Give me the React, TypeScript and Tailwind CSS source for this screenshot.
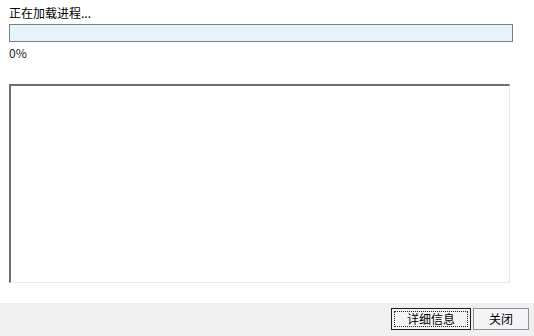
export default function App() {
  const font = { fontFamily: '"Noto Sans CJK SC", "Liberation Sans", sans-serif' };
  return (
    <div className="w-[534px] h-[336px] flex flex-col bg-white text-[12px] text-black" style={font}>
      <div className="flex-1 flex flex-col pl-[9px]">
        <div className="h-[24px] pt-[6px] leading-[14px]">正在加载进程...</div>
        <div className="w-[504px] h-[18px] border border-[#7f7f7f] bg-[#e6f3fb]" />
        <div className="mt-[4px] leading-[14px] text-[#222]">0%</div>
        <div className="mt-[24px] w-[501px] h-[199px] border-t-2 border-l-2 border-r border-b border-t-[#706f66] border-l-[#706f66] border-r-[#ecebe3] border-b-[#ecebe3] bg-white" />
      </div>
      <div className="h-[33px] bg-[#f0f0f0] flex items-start justify-end pt-[5px] pr-[5px] gap-[2px]">
        <button className="w-[80px] h-[22px] border border-[#1c1c1c] bg-[#f4f4f4] p-[2px] flex">
          <span className="flex-1 border border-dotted border-[#222] flex items-center justify-center leading-none">详细信息</span>
        </button>
        <button className="w-[56px] h-[22px] border border-[#8f8f9f] bg-[#f4f4f6] flex items-center justify-center leading-none">关闭</button>
      </div>
    </div>
  );
}
